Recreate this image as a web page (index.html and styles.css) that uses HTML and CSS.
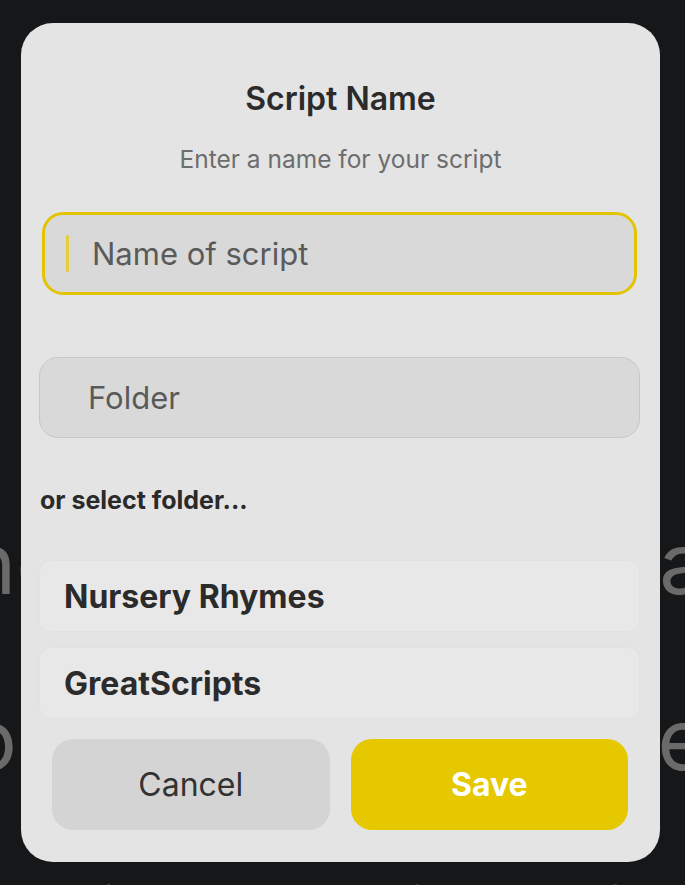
FILE: index.html
```html
<!DOCTYPE html>
<html lang="en">
<head>
<meta charset="utf-8">
<title>Script Name</title>
<link rel="stylesheet" href="styles.css">
</head>
<body>
<div class="stage">
  <div class="backdrop" aria-hidden="true">
    <div class="bg-line"><span class="bg-left">ne</span><span class="bg-right">a</span></div>
    <div class="bg-line"><span class="bg-left">o</span><span class="bg-right">e</span></div>
    <div class="bg-line bg-full">hit the lid with it is, di li</div>
  </div>
  <div class="modal">
    <h1 class="title">Script Name</h1>
    <p class="subtitle">Enter a name for your script</p>
    <div class="field field-name">
      <span class="caret"></span>
      <span class="placeholder">Name of script</span>
    </div>
    <div class="field field-folder">
      <span class="placeholder">Folder</span>
    </div>
    <p class="section-label">or select folder...</p>
    <div class="folder-list">
      <div class="folder-item">Nursery Rhymes</div>
      <div class="folder-item">GreatScripts</div>
    </div>
    <div class="actions">
      <button class="btn btn-cancel">Cancel</button>
      <button class="btn btn-save">Save</button>
    </div>
  </div>
</div>
</body>
</html>
```
FILE: styles.css
```css
html, body {
  margin: 0;
  padding: 0;
  background: #161719;
  font-family: Inter, "Noto Sans", "Liberation Sans", sans-serif;
}
.stage {
  position: relative;
  width: 685px;
  height: 885px;
  overflow: hidden;
}
.backdrop {
  position: absolute;
  inset: 0;
  padding-top: 476px;
  color: #6a6a6a;
  font-size: 85px;
  line-height: 176px;
  z-index: 0;
}
.bg-line {
  display: flex;
  justify-content: space-between;
  height: 176px;
  white-space: nowrap;
}
.bg-left { margin-left: -34px; }
.bg-right { margin-right: -22px; }
.bg-full {
  justify-content: flex-start;
  margin-top: 2px;
  padding-left: 40px;
  letter-spacing: 8px;
}

.modal {
  position: relative;
  z-index: 1;
  margin: 23px 0 0 21px;
  width: 639px;
  height: 839px;
  box-sizing: border-box;
  background: #e4e4e4;
  border-radius: 32px;
  padding: 58px 0 0 0;
  display: flex;
  flex-direction: column;
}
.title {
  margin: 0;
  text-align: center;
  font-size: 32px;
  line-height: 36px;
  font-weight: 600;
  color: #2b2b2b;
}
.subtitle {
  margin: 28px 0 0;
  text-align: center;
  font-size: 24.5px;
  line-height: 28px;
  color: #6d6d6d;
}
.field {
  box-sizing: border-box;
  display: flex;
  align-items: center;
  background: #d9d9d9;
}
.field-name {
  margin: 39px 23px 0 21px;
  height: 83px;
  border: 3px solid #e3c400;
  border-radius: 21px;
  padding-left: 21px;
  gap: 23px;
}
.caret {
  width: 3px;
  height: 37px;
  background: #e6cd3a;
  border-radius: 2px;
}
.field-folder {
  margin: 62px 20px 0 18px;
  height: 81px;
  border: 1.5px solid #c7c7c7;
  border-radius: 19px;
  padding-left: 48px;
}
.placeholder {
  font-size: 31px;
  color: #5a5a5a;
}
.section-label {
  margin: 47px 0 0 19px;
  font-size: 25px;
  line-height: 30px;
  font-weight: 700;
  color: #2a2a2a;
}
.folder-list {
  margin: 46px 21px 0 19px;
  display: flex;
  flex-direction: column;
  gap: 17px;
}
.folder-item {
  height: 70px;
  box-sizing: border-box;
  display: flex;
  align-items: center;
  padding-left: 24px;
  background: #e8e8e8;
  border-radius: 10px;
  box-shadow: 0 0 3px rgba(0,0,0,0.03);
  font-size: 32px;
  font-weight: 700;
  color: #2b2b2b;
}
.actions {
  margin: 21px 32px 0 31px;
  display: flex;
  gap: 21px;
}
.btn {
  flex: 1;
  height: 91px;
  border: none;
  border-radius: 21px;
  font-family: inherit;
  font-size: 32px;
  padding: 0;
}
.btn-cancel {
  background: #d4d4d4;
  color: #323232;
}
.btn-save {
  background: #e5c800;
  color: #ffffff;
  font-weight: 700;
}
```
